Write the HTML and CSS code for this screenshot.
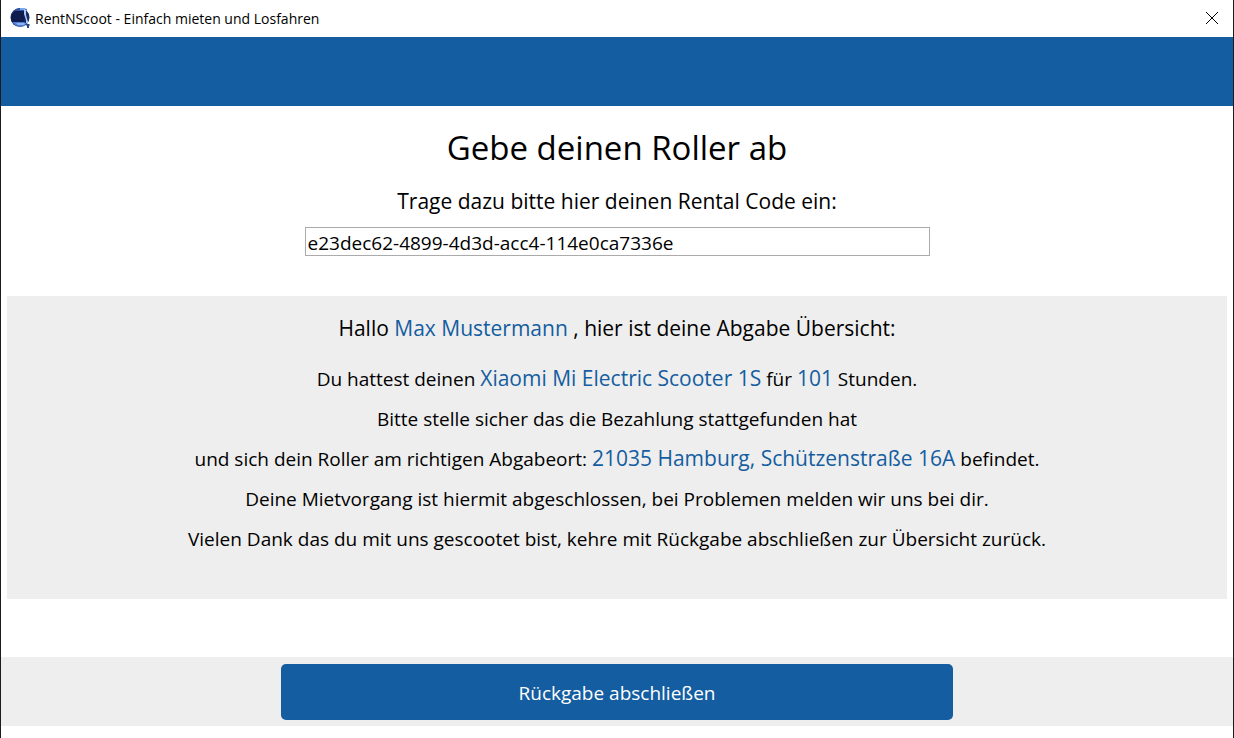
FILE: index.html
```html
<!DOCTYPE html>
<html lang="de">
<head>
<meta charset="utf-8">
<title>RentNScoot - Einfach mieten und Losfahren</title>
<link rel="stylesheet" href="styles.css">
</head>
<body>
<div class="window">
  <header class="titlebar">
    <svg class="logo" viewBox="0 -1 22 22" aria-hidden="true">
      <circle cx="10" cy="9.500" r="9.500" fill="#172b66"/>
      <path d="M3 4l3-3 5-1 6 1-1 2H6z" fill="#2f55a4"/>
      <path d="M10 0h5v2h-5z" fill="#79a9f2"/>
      <path d="M2 7l3-4h9l1 5-1 6H2l-1-4z" fill="#101d4c"/>
      <path d="M14 1l2 1 0 5 2 7 0 2-2-1 0-3-2-6z" fill="#a9cbfa"/>
      <path d="M2 14h12l3 2-3 2-4 1-5-2z" fill="#4f7fd6"/>
      <path d="M6 15h8l2 1-3 1H8z" fill="#8bb5f6"/>
      <path d="M15 16h4l1 1-1 1v2h-2v-2z" fill="#28447e"/>
    </svg>
    <h1 class="window-title">RentNScoot - Einfach mieten und Losfahren</h1>
    <button class="close" type="button" aria-label="Schließen">
      <svg viewBox="0 0 14 14" aria-hidden="true"><path d="M1 1l12 12M13 1L1 13" stroke="#000" fill="none"/></svg>
    </button>
  </header>
  <div class="banner"></div>
  <main class="content">
    <h2 class="heading">Gebe deinen Roller ab</h2>
    <label class="code-label" for="code">Trage dazu bitte hier deinen Rental Code ein:</label>
    <input class="code" id="code" type="text" value="e23dec62-4899-4d3d-acc4-114e0ca7336e">
    <section class="summary">
      <p class="greeting">Hallo <span class="value">Max Mustermann</span> , hier ist deine Abgabe Übersicht:</p>
      <p class="line">Du hattest deinen <span class="value">Xiaomi Mi Electric Scooter 1S</span> für <span class="value">101</span> Stunden.</p>
      <p class="line">Bitte stelle sicher das die Bezahlung stattgefunden hat</p>
      <p class="line">und sich dein Roller am richtigen Abgabeort: <span class="value">21035 Hamburg, Schützenstraße 16A</span> befindet.</p>
      <p class="line">Deine Mietvorgang ist hiermit abgeschlossen, bei Problemen melden wir uns bei dir.</p>
      <p class="line">Vielen Dank das du mit uns gescootet bist, kehre mit Rückgabe abschließen zur Übersicht zurück.</p>
    </section>
  </main>
  <footer class="actions">
    <button class="submit" type="button">Rückgabe abschließen</button>
  </footer>
</div>
</body>
</html>
```
FILE: styles.css
```css
* { box-sizing: border-box; }
body { margin: 0; background: #fff; color: #000; font-family: "Open Sans", "Noto Sans", sans-serif; }
.window { display: flex; flex-direction: column; min-height: 100vh; padding-bottom: 12px; border: solid #1c1c20; border-width: 0 1px; }
.titlebar { display: flex; align-items: center; height: 37px; padding: 0 14px 1px 9px; }
.logo { width: 22px; height: 22px; }
.window-title { flex: 1; margin: 0 0 0 3px; font-size: 14px; font-weight: 400; }
.close { display: flex; padding: 0; border: 0; background: none; }
.close svg { width: 14px; height: 14px; }
.banner { height: 69px; background: #145da0; }
.content { flex: 1; display: flex; flex-direction: column; align-items: center; padding: 18px 6px 0; }
.heading { margin: 0; font-size: 33px; line-height: 48px; font-weight: 400; }
.code-label { margin-top: 13px; font-size: 21px; line-height: 32px; }
.code { width: 625px; max-width: 100%; height: 29px; margin-top: 10px; padding: 2px 2px 0; border: 1px solid #ababab; background: #fff; color: #000; font: 19px "Open Sans", "Noto Sans", sans-serif; }
.summary { width: 100%; margin-top: 40px; padding: 16px 0 40px; background: #eee; text-align: center; }
.greeting { margin: 0 0 15px; font-size: 21px; line-height: 32px; }
.line { margin: 0; font-size: 19px; line-height: 40px; }
.value { color: #145da0; font-size: 21px; line-height: 1; }
.actions { display: flex; justify-content: center; height: 69px; padding: 7px 0 6px; background: #eee; }
.submit { width: 672px; max-width: 100%; padding: 2px 0 0; border: 0; border-radius: 5px; background: #145da0; color: #fff; font: 19px "Open Sans", "Noto Sans", sans-serif; }
```
